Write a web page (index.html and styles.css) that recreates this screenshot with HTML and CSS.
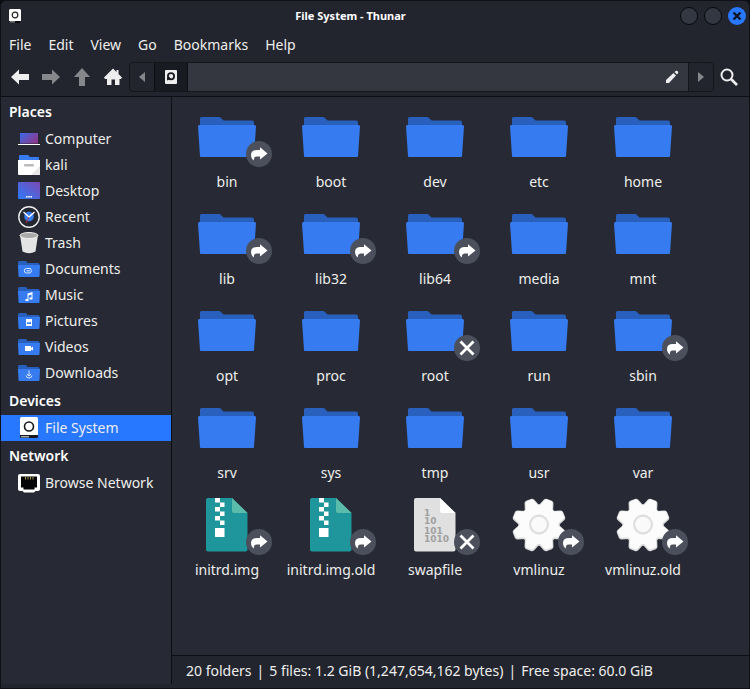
FILE: index.html
```html
<!DOCTYPE html>
<html lang="en">
<head>
<meta charset="utf-8">
<title>File System - Thunar</title>
<link rel="stylesheet" href="styles.css">
</head>
<body>
<svg class="sprite" aria-hidden="true">
  <defs>
    <linearGradient id="screen" x1="0" y1="0" x2="1" y2="0.6">
      <stop offset="0" stop-color="#3a6bea"/><stop offset="1" stop-color="#8a3a8e"/>
    </linearGradient>
    <linearGradient id="wall" x1="0" y1="1" x2="1" y2="0">
      <stop offset="0" stop-color="#2c7bfa"/><stop offset="1" stop-color="#7d49b4"/>
    </linearGradient>
    <symbol id="folder" viewBox="0 0 64 64">
      <path fill="#2a60bd" d="M5 13.500q0-1.500 1.500-1.500H24q1 0 2 1L28.500 15.500H57q2 0 2 2V30H5z"/>
      <path fill="#367bf0" d="M4.300 20H59.700q1.300 0 1.300 1.500L59 51q0 1-1 1H6q-1 0-1-1L3 21.500Q3 20 4.300 20z"/>
    </symbol>
    <symbol id="archive" viewBox="0 0 64 64">
      <path fill="#1e969b" d="M12.500 5H37L52.500 20V56.500q0 2-2 2H13q-2 0-2-2V7q0-2 2-2z"/>
      <path fill="#5cbcac" d="M37 5 52.500 20H39q-2 0-2-2z"/>
      <path fill="#fff" d="M20 5h5v4.500h-5zM25 9.500h4.500V14H25zM20 14h5v4.500h-5zM25 18.500h4.500V23H25zM20 23h5v4.500h-5zM25 27.500h4.500V32H25zM20 35h9.500v9H20z"/>
    </symbol>
    <symbol id="binary" viewBox="0 0 64 64">
      <path fill="#e0e0e0" d="M12.500 5H37L52.500 20V56.500q0 2-2 2H13q-2 0-2-2V7q0-2 2-2z"/>
      <path fill="#fff" d="M37 5 52.500 20H39q-2 0-2-2z"/>
      <g class="digits"><text x="21" y="23">1</text><text x="21" y="31">10</text><text x="21" y="41">101</text><text x="21" y="49">1010</text></g>
    </symbol>
    <g id="teeth">
      <circle cx="32" cy="32" r="19.500"/>
      <path id="tooth" d="M25.500 14 28 7Q28.500 6 29.500 6H34.500Q35.500 6 36 7L38.500 14V50L36 57Q35.500 58 34.500 58H29.500Q28.500 58 28 57L25.500 50z" transform="rotate(22.500 32 32)"/>
      <use href="#tooth" transform="rotate(45 32 32)"/>
      <use href="#tooth" transform="rotate(90 32 32)"/>
      <use href="#tooth" transform="rotate(135 32 32)"/>
    </g>
    <symbol id="gear" viewBox="0 0 64 64">
      <use href="#teeth" fill="#dedede" stroke="#dedede" stroke-width="2.400" stroke-linejoin="round"/>
      <use href="#teeth" fill="#fcfcfc" transform="translate(0 -.6)"/>
      <circle cx="32" cy="31.500" r="10" fill="#dedede"/><circle cx="32" cy="31.500" r="7.800" fill="#fafafa"/>
    </symbol>
    <symbol id="link" viewBox="0 0 26 26">
      <circle cx="13" cy="13" r="13" fill="#4c505d"/>
      <path fill="#fff" d="M14 6.200 21.500 12.500 14 18.500V15.500H10.500Q7.500 15.500 8 19.500 5 17.500 5 14 5 9 11 9H14z"/>
    </symbol>
    <symbol id="locked" viewBox="0 0 26 26">
      <circle cx="13" cy="13" r="13" fill="#4c505d"/>
      <path d="M6.500 6.500 19.500 19.500M19.500 6.500 6.500 19.500" stroke="#fff" stroke-width="2.800"/>
    </symbol>
    <symbol id="mini" viewBox="0 0 22 22">
      <path fill="#2a60bd" d="M0 4.500Q0 3 1.500 3H8l1.500 2H20q1.500 0 1.500 1.500V11H0z"/>
      <path fill="#367bf0" d="M0 7H22L21.500 18Q21.500 19 20.500 19H1.500Q.500 19 .500 18z"/>
    </symbol>
    <symbol id="drive" viewBox="0 0 22 22">
      <path fill="#fff" d="M3.500 0h15Q20 0 20 1.500V18H2V1.500Q2 0 3.500 0z"/>
      <path fill="#16181e" d="M2 18H20v1.500q0 1.500-1.500 1.500h-15Q2 21 2 19.500z"/><path fill="#aaa" d="M3 19h8v1.500H3z"/>
      <circle cx="11" cy="9.500" r="4.500" fill="none" stroke="#16181e" stroke-width="1.600"/>
    </symbol>
  </defs>
</svg>

<div class="window">
  <header class="titlebar">
    <svg class="app-icon" viewBox="0 0 12 14"><path fill="#fff" d="M0 1 1 0H11L12 1V12H0z"/><path fill="#777" d="M1 12h5v1.500H1z"/><path fill="#050507" d="M6 12h5v2H6z"/><circle cx="6" cy="6" r="2.800" fill="none" stroke="#222" stroke-width="1.200"/></svg>
    <h1>File System - Thunar</h1>
    <button class="win" aria-label="Minimize"></button>
    <button class="win" aria-label="Maximize"></button>
    <button class="win close" aria-label="Close"><svg viewBox="0 0 18 18"><path d="M5.500 5.500 12.500 12.500M12.500 5.500 5.500 12.500" stroke="#10131c" stroke-width="2.400"/></svg></button>
  </header>

  <nav class="menubar">
    <button>File</button><button>Edit</button><button>View</button><button>Go</button><button>Bookmarks</button><button>Help</button>
  </nav>

  <div class="toolbar">
    <div class="nav-buttons">
      <button aria-label="Back"><svg viewBox="0 0 20 20"><path fill="#eee" d="M1 10 9 2.500V7H19V13H9V17.500z"/></svg></button>
      <button aria-label="Forward"><svg viewBox="0 0 20 20"><path fill="#85878b" d="M19 10 11 2.500V7H1V13H11V17.500z"/></svg></button>
      <button aria-label="Up"><svg viewBox="0 0 20 20"><path fill="#85878b" d="M10 1 18 10H13V19H7V10H2z"/></svg></button>
      <button aria-label="Home"><svg viewBox="0 0 20 20"><path fill="#eee" d="M10 1.500 13.500 5V3H15.500V7L19 10.500 18 12H16.500V18H12V12.500H8.500V18H4V12H2L1 10.500z"/></svg></button>
    </div>
    <div class="pathbar">
      <button class="step" aria-label="Scroll path left"><svg viewBox="0 0 6 10"><path fill="#85878b" d="M6 0V10L0 5z"/></svg></button>
      <button class="root" aria-label="File System"><svg viewBox="0 0 12 14"><path fill="#eee" d="M1 0H11Q12 0 12 1V13Q12 14 11 14H1Q0 14 0 13V1Q0 0 1 0z"/><circle cx="6" cy="6.200" r="3.100" fill="none" stroke="#191b22" stroke-width="1.800"/><path fill="#191b22" d="M2 10.500V8L4 6.500 6 9z"/></svg></button>
      <label class="location"><input type="text" aria-label="Location"><svg viewBox="0 0 14 14"><path fill="#eee" d="M1 13V10L8.500 3 11 5.500 4 13zM9.500 2 11 .800Q12 .500 13 1.500 13.500 2.500 13 3.200L12 4.500z"/></svg></label>
      <button class="step" aria-label="Scroll path right"><svg viewBox="0 0 6 10"><path fill="#85878b" d="M0 0V10L6 5z"/></svg></button>
    </div>
    <button class="search" aria-label="Search"><svg viewBox="0 0 18 18"><circle cx="7" cy="7" r="5.500" fill="none" stroke="#eee" stroke-width="2"/><path d="M11 11 17 17" stroke="#eee" stroke-width="2.600"/></svg></button>
  </div>

  <div class="body">
    <aside class="sidebar">
      <h2>Places</h2>
      <ul>
        <li><a href="#"><svg viewBox="0 0 22 22"><path fill="url(#screen)" d="M2 5H20V15.500H2z"/><path fill="#fff" d="M0 16H22v1H0z"/></svg>Computer</a></li>
        <li><a href="#"><svg viewBox="0 0 22 22"><path fill="#367bf0" d="M1 2Q1 1 2 1H10L12 3H20q1 0 1 1V9H1z"/><path fill="#fff" d="M0 6H22V20q0 1-1 1H1q-1 0-1-1z"/><path fill="#e8e8e8" d="M22 12V20q0 1-1 1H13z"/><rect x="6" y="10" width="10" height="2.500" rx="1" fill="#bbb"/></svg>kali</a></li>
        <li><a href="#"><svg viewBox="0 0 22 22"><path fill="url(#wall)" d="M1 2H21q1 0 1 1V18q0 1-1 1H1q-1 0-1-1V3Q0 2 1 2z"/><path fill="#fff" d="M8 16h1.500v1.500H8zM10.200 16h1.600v1.500h-1.600zM12.500 16H14v1.500h-1.500z"/></svg>Desktop</a></li>
        <li><a href="#"><svg viewBox="0 0 22 22"><circle cx="11" cy="11" r="10.200" fill="#242630" stroke="#eee" stroke-width="1.400"/><circle cx="11" cy="10.500" r="4.800" fill="#367bf0"/><path d="M5.500 6 11 11 16.500 6" fill="none" stroke="#fff" stroke-width="1.300"/><path d="M11 11 8 17" stroke="#b53a4a"/></svg>Recent</a></li>
        <li><a href="#"><svg viewBox="0 0 22 22"><path fill="#e4e4e4" d="M2 3 4.500 19.500Q11 23 17.500 19.500L20 3z"/><ellipse cx="11" cy="3.500" rx="9" ry="3" fill="#aaa" stroke="#eee"/></svg>Trash</a></li>
        <li><a href="#"><svg viewBox="0 0 22 22"><use href="#mini"/><path d="M13 10.500H8.500a2 2 0 0 0 0 4.500H12a2.500 2.500 0 0 0 0-4.500M8.500 12.800H12" fill="none" stroke="#dce8ff"/></svg>Documents</a></li>
        <li><a href="#"><svg viewBox="0 0 22 22"><use href="#mini"/><path fill="#fff" d="M9.500 9.500 14.500 8V15.500H11.500V13.500H13.500V10.500L10.500 11.500V17H7.500V15H9.500z"/></svg>Music</a></li>
        <li><a href="#"><svg viewBox="0 0 22 22"><use href="#mini"/><path fill="#fff" d="M8 9H14V16H8z"/><path fill="#367bf0" d="M9 14V12.500L10 12 11 13 12 11.500 13 12.500V14z"/></svg>Pictures</a></li>
        <li><a href="#"><svg viewBox="0 0 22 22"><use href="#mini"/><path fill="#fff" d="M7 10H13V12L15 10.500V14.500L13 13.500V15H7z"/></svg>Videos</a></li>
        <li><a href="#"><svg viewBox="0 0 22 22"><use href="#mini"/><path d="M11 8.500V14M8.800 12 11 14 13.200 12M8 13.500Q8.500 16 11 16 13.500 16 14 13.500" fill="none" stroke="#dce8ff"/></svg>Downloads</a></li>
      </ul>
      <h2>Devices</h2>
      <ul>
        <li><a class="selected" href="#"><svg><use href="#drive"/></svg>File System</a></li>
      </ul>
      <h2>Network</h2>
      <ul>
        <li><a href="#"><svg viewBox="0 0 22 22"><path fill="#fff" d="M2 2H20q2 0 2 2V17q0 2-2 2H17.500L16 20.500H6L4.500 19H2q-2 0-2-2V4Q0 2 2 2z"/><path fill="#050507" d="M3 4.500H19V15.500H16.500V17.500H5.500V15.500H3z"/><path d="M7.500 5v2.500M10 5v2.500M12.500 5v2.500M15 5v2.500" stroke="#a99650"/></svg>Browse Network</a></li>
      </ul>
    </aside>

    <main class="content">
      <ul class="files">
        <li><svg><use href="#folder"/></svg><svg class="emblem"><use href="#link"/></svg><span>bin</span></li>
        <li><svg><use href="#folder"/></svg><span>boot</span></li>
        <li><svg><use href="#folder"/></svg><span>dev</span></li>
        <li><svg><use href="#folder"/></svg><span>etc</span></li>
        <li><svg><use href="#folder"/></svg><span>home</span></li>
        <li><svg><use href="#folder"/></svg><svg class="emblem"><use href="#link"/></svg><span>lib</span></li>
        <li><svg><use href="#folder"/></svg><svg class="emblem"><use href="#link"/></svg><span>lib32</span></li>
        <li><svg><use href="#folder"/></svg><svg class="emblem"><use href="#link"/></svg><span>lib64</span></li>
        <li><svg><use href="#folder"/></svg><span>media</span></li>
        <li><svg><use href="#folder"/></svg><span>mnt</span></li>
        <li><svg><use href="#folder"/></svg><span>opt</span></li>
        <li><svg><use href="#folder"/></svg><span>proc</span></li>
        <li><svg><use href="#folder"/></svg><svg class="emblem"><use href="#locked"/></svg><span>root</span></li>
        <li><svg><use href="#folder"/></svg><span>run</span></li>
        <li><svg><use href="#folder"/></svg><svg class="emblem"><use href="#link"/></svg><span>sbin</span></li>
        <li><svg><use href="#folder"/></svg><span>srv</span></li>
        <li><svg><use href="#folder"/></svg><span>sys</span></li>
        <li><svg><use href="#folder"/></svg><span>tmp</span></li>
        <li><svg><use href="#folder"/></svg><span>usr</span></li>
        <li><svg><use href="#folder"/></svg><span>var</span></li>
        <li><svg><use href="#archive"/></svg><svg class="emblem"><use href="#link"/></svg><span>initrd.img</span></li>
        <li><svg><use href="#archive"/></svg><svg class="emblem"><use href="#link"/></svg><span>initrd.img.old</span></li>
        <li><svg><use href="#binary"/></svg><svg class="emblem"><use href="#locked"/></svg><span>swapfile</span></li>
        <li><svg><use href="#gear"/></svg><svg class="emblem"><use href="#link"/></svg><span>vmlinuz</span></li>
        <li><svg><use href="#gear"/></svg><svg class="emblem"><use href="#link"/></svg><span>vmlinuz.old</span></li>
      </ul>
      <footer class="status"><span>20 folders</span><span>|</span><span>5 files: 1.2 GiB (1,247,654,162 bytes)</span><span>|</span><span>Free space: 60.0 GiB</span></footer>
    </main>
  </div>
</div>
</body>
</html>
```
FILE: styles.css
```css
* { box-sizing: border-box; }
body { margin: 0; background: #0d0e13; color: #eeeeec; font: 14px/20px "Noto Sans", sans-serif; }
button { margin: 0; padding: 0; border: 0; background: none; color: inherit; font: inherit; }
ul { margin: 0; padding: 0; list-style: none; }
h1, h2 { margin: 0; font-weight: 600; }
svg { display: block; }
.sprite { position: absolute; width: 0; height: 0; }

.window { display: flex; flex-direction: column; min-height: 100vh; background: #23252e; border: 1px solid #101117; border-radius: 6px 6px 0 0; }

.titlebar { display: flex; align-items: center; height: 30px; padding: 0 3px 0 8px; gap: 6px; }
.titlebar h1 { flex: 1; text-align: center; font-size: 11px; font-weight: 700; color: #fff; }
.app-icon { width: 12px; height: 14px; }
.win { width: 18px; height: 18px; border: 1px solid #08090c; border-radius: 50%; background: #343843; }
.win.close { border: 0; background: #2777ff; }

.menubar { display: flex; gap: 17px; height: 27px; padding: 0 8px; align-items: center; }

.toolbar { display: flex; align-items: center; height: 39px; padding: 0 11px 0 9px; border-bottom: 1px solid #0d0e13; }
.nav-buttons { display: flex; gap: 11px; }
.nav-buttons svg { width: 20px; height: 20px; }
.pathbar { display: flex; flex: 1; height: 30px; margin: 0 6px; border: 1px solid #15161c; border-radius: 4px; }
.step { display: grid; place-items: center; width: 24px; }
.step svg { width: 6px; height: 10px; }
.root { display: grid; place-items: center; width: 34px; background: #191b22; border: solid #0d0e13; border-width: 0 1px; }
.root svg { width: 12px; height: 14px; }
.location { display: flex; flex: 1; align-items: center; padding-right: 9px; background: #343640; border-right: 1px solid #15161c; }
.location input { flex: 1; min-width: 0; border: 0; outline: 0; background: none; color: inherit; font: inherit; }
.location svg { width: 14px; height: 14px; }
.search svg { width: 18px; height: 18px; }

.body { display: flex; flex: 1; padding-bottom: 4px; }
.sidebar { width: 171px; background: #272a34; border-right: 1px solid #0d0e13; }
.sidebar h2 { padding: 5px 8px 4px; font-size: 14px; color: #fff; }
.sidebar a { display: flex; align-items: center; gap: 5px; height: 26px; padding-left: 17px; color: inherit; text-decoration: none; }
.sidebar svg { width: 22px; height: 22px; }
.sidebar .selected { background: #2777ff; }

.content { display: flex; flex: 1; flex-direction: column; min-width: 0; }
.files { display: grid; flex: 1; grid-template-columns: repeat(auto-fill, 104px); align-content: start; padding: 8px 0 0 3px; background: #272a34; }
.files li { position: relative; display: flex; flex-direction: column; align-items: center; gap: 3px; height: 97px; }
.files svg { width: 64px; height: 64px; }
.files .emblem { position: absolute; top: 36px; left: 71px; width: 26px; height: 26px; }
.digits { fill: #a0a0a0; font: bold 9px "DejaVu Sans", sans-serif; }
.status { display: flex; gap: 5px; padding: 5px 14px 3px; border-top: 1px solid #0d0e13; }
```
